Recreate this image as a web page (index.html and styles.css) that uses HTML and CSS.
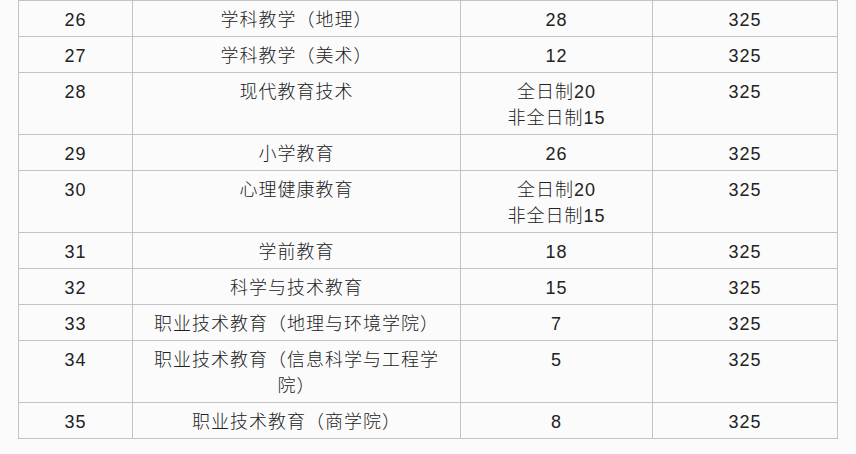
FILE: index.html
```html
<!DOCTYPE html>
<html lang="zh-CN">
<head>
<meta charset="utf-8">
<link rel="stylesheet" href="styles.css">
</head>
<body>
<table class="score-table">
  <colgroup>
    <col class="c-no">
    <col class="c-major">
    <col class="c-plan">
    <col class="c-score">
  </colgroup>
  <tbody>
    <tr><td>26</td><td>学科教学（地理）</td><td>28</td><td>325</td></tr>
    <tr><td>27</td><td>学科教学（美术）</td><td>12</td><td>325</td></tr>
    <tr><td>28</td><td>现代教育技术</td><td>全日制20<br>非全日制15</td><td>325</td></tr>
    <tr><td>29</td><td>小学教育</td><td>26</td><td>325</td></tr>
    <tr><td>30</td><td>心理健康教育</td><td>全日制20<br>非全日制15</td><td>325</td></tr>
    <tr><td>31</td><td>学前教育</td><td>18</td><td>325</td></tr>
    <tr><td>32</td><td>科学与技术教育</td><td>15</td><td>325</td></tr>
    <tr><td>33</td><td>职业技术教育（地理与环境学院）</td><td>7</td><td>325</td></tr>
    <tr><td>34</td><td>职业技术教育（信息科学与工程学院）</td><td>5</td><td>325</td></tr>
    <tr><td>35</td><td>职业技术教育（商学院）</td><td>8</td><td>325</td></tr>
  </tbody>
</table>
</body>
</html>
```
FILE: styles.css
```css
html, body {
  margin: 0;
  padding: 0;
  background: #fbfbfc;
}
body {
  font-family: "Liberation Sans", "Noto Sans CJK SC", sans-serif;
  font-size: 18px;
  font-weight: 300;
  color: #222;
}
.score-table {
  margin-left: 18px;
  border-collapse: collapse;
  table-layout: fixed;
  width: 819px;
}
.c-no { width: 114px; }
.c-major { width: 328px; }
.c-plan { width: 192px; }
.c-score { width: 185px; }
.score-table td {
  border: 1px solid #c3c3c6;
  padding: 6px 8px 3px;
  line-height: 26px;
  letter-spacing: 1px;
  text-align: center;
  vertical-align: top;
}
```
